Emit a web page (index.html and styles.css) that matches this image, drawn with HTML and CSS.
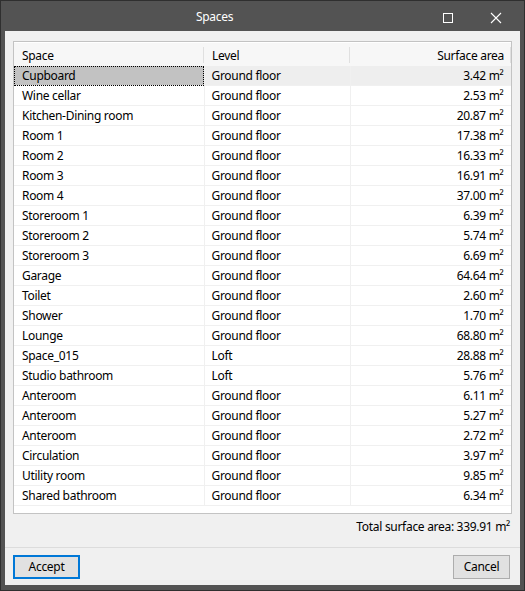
FILE: index.html
```html
<!DOCTYPE html>
<html>
<head>
<meta charset="utf-8">
<link rel="stylesheet" href="styles.css">
</head>
<body>
<div class="window">
  <div class="titlebar">
    <div class="title">Spaces</div>
    <div class="tb-btn"><svg width="12" height="12" viewBox="0 0 12 12"><rect x="1.5" y="1.5" width="9" height="9" fill="none" stroke="#fff" stroke-width="1"/></svg></div>
    <div class="tb-btn"><svg width="12" height="12" viewBox="0 0 12 12"><path d="M1 1L11 11M11 1L1 11" stroke="#fff" stroke-width="1.1"/></svg></div>
  </div>
  <div class="client">
    <div class="content">
      <div class="list">
        <table class="grid">
          <colgroup><col class="c1"><col class="c2"><col class="c3"></colgroup>
          <thead>
            <tr><th class="sep">Space</th><th class="sep">Level</th><th class="num sep">Surface area</th></tr>
          </thead>
          <tbody>
            <tr class="sel"><td class="focus">Cupboard</td><td>Ground floor</td><td class="num">3.42 m²</td></tr>
            <tr><td>Wine cellar</td><td>Ground floor</td><td class="num">2.53 m²</td></tr>
            <tr><td>Kitchen-Dining room</td><td>Ground floor</td><td class="num">20.87 m²</td></tr>
            <tr><td>Room 1</td><td>Ground floor</td><td class="num">17.38 m²</td></tr>
            <tr><td>Room 2</td><td>Ground floor</td><td class="num">16.33 m²</td></tr>
            <tr><td>Room 3</td><td>Ground floor</td><td class="num">16.91 m²</td></tr>
            <tr><td>Room 4</td><td>Ground floor</td><td class="num">37.00 m²</td></tr>
            <tr><td>Storeroom 1</td><td>Ground floor</td><td class="num">6.39 m²</td></tr>
            <tr><td>Storeroom 2</td><td>Ground floor</td><td class="num">5.74 m²</td></tr>
            <tr><td>Storeroom 3</td><td>Ground floor</td><td class="num">6.69 m²</td></tr>
            <tr><td>Garage</td><td>Ground floor</td><td class="num">64.64 m²</td></tr>
            <tr><td>Toilet</td><td>Ground floor</td><td class="num">2.60 m²</td></tr>
            <tr><td>Shower</td><td>Ground floor</td><td class="num">1.70 m²</td></tr>
            <tr><td>Lounge</td><td>Ground floor</td><td class="num">68.80 m²</td></tr>
            <tr><td>Space_015</td><td>Loft</td><td class="num">28.88 m²</td></tr>
            <tr><td>Studio bathroom</td><td>Loft</td><td class="num">5.76 m²</td></tr>
            <tr><td>Anteroom</td><td>Ground floor</td><td class="num">6.11 m²</td></tr>
            <tr><td>Anteroom</td><td>Ground floor</td><td class="num">5.27 m²</td></tr>
            <tr><td>Anteroom</td><td>Ground floor</td><td class="num">2.72 m²</td></tr>
            <tr><td>Circulation</td><td>Ground floor</td><td class="num">3.97 m²</td></tr>
            <tr><td>Utility room</td><td>Ground floor</td><td class="num">9.85 m²</td></tr>
            <tr><td>Shared bathroom</td><td>Ground floor</td><td class="num">6.34 m²</td></tr>
          </tbody>
        </table>
      </div>
      <div class="total">Total surface area: 339.91 m²</div>
    </div>
    <div class="footer">
      <button class="btn default">Accept</button>
      <button class="btn">Cancel</button>
    </div>
  </div>
</div>
</body>
</html>
```
FILE: styles.css
```css
html, body {
  margin: 0;
  padding: 0;
  background: #2f2f2f;
}
body {
  font-family: "Segoe UI", "Noto Sans", "Liberation Sans", sans-serif;
  font-size: 12px;
  letter-spacing: -0.3px;
  color: #000;
}
.window {
  width: 525px;
  height: 591px;
  box-sizing: border-box;
  background: #535353;
  border: 1px solid #2f2f2f;
  padding: 0 4px 5px 4px;
  display: flex;
  flex-direction: column;
}
.titlebar {
  height: 30px;
  display: flex;
  align-items: center;
  flex: none;
}
.title {
  flex: 1;
  text-align: center;
  color: #fff;
  padding-top: 1px;
}
.tb-btn {
  width: 48px;
  height: 30px;
  display: flex;
  align-items: center;
  justify-content: center;
  padding-top: 4px;
  box-sizing: border-box;
}
.client {
  flex: 1;
  background: #f0f0f0;
  display: flex;
  flex-direction: column;
}
.content {
  flex: 1;
  padding: 10px 8px 0 8px;
  display: flex;
  flex-direction: column;
}
.list {
  height: 473px;
  box-sizing: border-box;
  border: 1px solid #c3c3c3;
  background: #fff;
  overflow: hidden;
}
.grid {
  border-collapse: collapse;
  table-layout: fixed;
  width: 497px;
}
.c1 { width: 190px; }
.c2 { width: 146px; }
.c3 { width: 161px; }
.grid th {
  height: 21px;
  padding: 2px 7px 0 8px;
  font-weight: normal;
  text-align: left;
  background: #f7f7f7;
  border-top: 1px solid #ffffff;
  position: relative;
  white-space: nowrap;
}
.grid th.sep::after {
  content: "";
  position: absolute;
  right: 0;
  top: 4px;
  bottom: 3px;
  width: 1px;
  background: #e0e0e0;
}
.grid td {
  height: 19px;
  padding: 0 7px 0 7px;
  border-bottom: 1px solid #f0f0f0;
  border-right: 1px solid #f0f0f0;
  white-space: nowrap;
  line-height: 19px;
}
.grid td:first-child { padding-left: 8px; }
.grid .num { text-align: right; }
.grid tr.sel td { background: #eeeeee; }
.grid tr.sel td.focus {
  background: #c2c2c2;
  outline: 1px dotted #000;
  outline-offset: -1px;
}
.total {
  text-align: right;
  padding: 3px 2px 0 0;
  line-height: 20px;
  height: 29px;
}
.footer {
  height: 38px;
  border-top: 1px solid #dcdcdc;
  display: flex;
  justify-content: space-between;
  align-items: flex-start;
  padding: 7px 10px 0 8px;
  box-sizing: border-box;
  flex: none;
}
.btn {
  font: inherit;
  letter-spacing: inherit;
  color: #000;
  background: #e1e1e1;
  border: 1px solid #adadad;
  height: 24px;
  width: 57px;
  padding: 0 0 1px 0;
  margin: 0;
  box-sizing: border-box;
}
.btn.default {
  width: 67px;
  border: 2px solid #0078d7;
}
```
